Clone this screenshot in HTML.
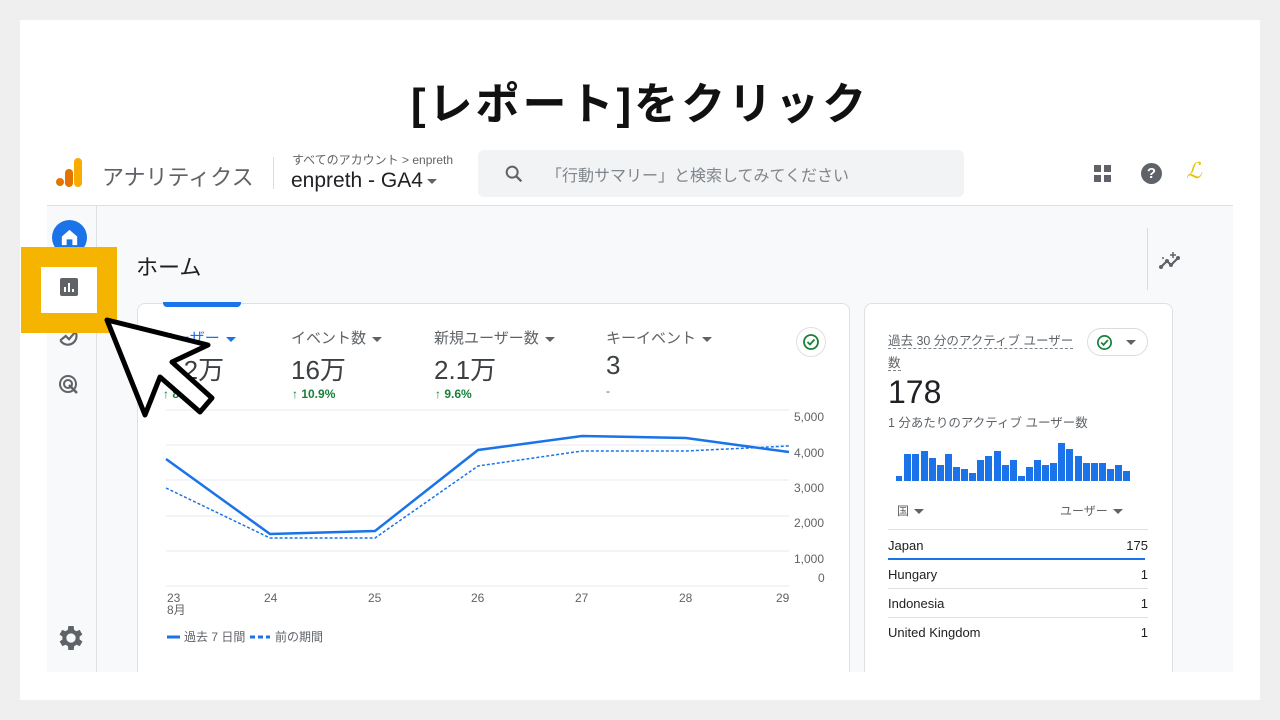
<!DOCTYPE html>
<html><head><meta charset="utf-8"><style>
*{margin:0;padding:0;box-sizing:border-box}
body{width:1280px;height:720px;background:#efefef;font-family:"Liberation Sans","Noto Sans CJK JP",sans-serif;position:relative;overflow:hidden;color:#3c4043}
.abs{position:absolute}
.slide{left:20px;top:20px;width:1240px;height:680px;background:#fff}
.title{left:0;width:1280px;top:68px;text-align:center;font-size:44px;font-weight:700;color:#111;letter-spacing:3px}
.dd{display:inline-block;width:0;height:0;border-left:5px solid transparent;border-right:5px solid transparent;border-top:5px solid #5f6368;vertical-align:middle;margin-left:6px}
</style></head><body>
<div class="abs slide"></div>
<div class="abs title">[レポート]をクリック</div>

<!-- app frame -->
<div class="abs" style="left:47px;top:140px;width:1186px;height:66px;background:#fff;border-bottom:1px solid #e0e0e0"></div>
<div class="abs" style="left:47px;top:206px;width:1186px;height:466px;background:#f8f9fa"></div>
<div class="abs" style="left:96px;top:206px;width:1px;height:466px;background:#e0e0e0"></div>

<!-- logo -->
<div class="abs" style="left:56px;top:178px;width:8px;height:8px;border-radius:4px;background:#e37400"></div>
<div class="abs" style="left:65px;top:169px;width:8px;height:18px;border-radius:4px;background:#e37400"></div>
<div class="abs" style="left:74px;top:158px;width:8px;height:29px;border-radius:4px;background:#f9ab00"></div>
<div class="abs" style="left:102px;top:160px;font-size:22px;color:#5f6368">アナリティクス</div>
<div class="abs" style="left:273px;top:157px;width:1px;height:32px;background:#dadce0"></div>
<div class="abs" style="left:292px;top:151px;font-size:12px;color:#5f6368">すべてのアカウント &gt; enpreth</div>
<div class="abs" style="left:291px;top:169px;font-size:21px;color:#202124">enpreth - GA4<span class="dd" style="margin-left:4px"></span></div>
<div class="abs" style="left:478px;top:150px;width:486px;height:47px;background:#f1f3f4;border-radius:6px"></div>
<svg class="abs" style="left:503px;top:163px" width="22" height="22" viewBox="0 0 24 24"><circle cx="10" cy="10" r="6" fill="none" stroke="#5f6368" stroke-width="2.2"/><path d="M14.5 14.5L20 20" stroke="#5f6368" stroke-width="2.5"/></svg>
<div class="abs" style="left:546px;top:162px;font-size:16px;color:#80868b">「行動サマリー」と検索してみてください</div>
<svg class="abs" style="left:1093px;top:164px" width="20" height="20"><rect x="1" y="1" width="7" height="7" fill="#5f6368"/><rect x="11" y="1" width="7" height="7" fill="#5f6368"/><rect x="1" y="11" width="7" height="7" fill="#5f6368"/><rect x="11" y="11" width="7" height="7" fill="#5f6368"/></svg>
<div class="abs" style="left:1141px;top:163px;width:21px;height:21px;border-radius:50%;background:#5f6368;color:#fff;font-size:15px;font-weight:700;text-align:center;line-height:21px">?</div>
<div class="abs" style="left:1186px;top:158px;font-size:22px;color:#e8c400;font-style:italic;font-family:'Liberation Serif',serif">ℒ</div>

<!-- sidebar -->
<div class="abs" style="left:52px;top:220px;width:35px;height:35px;border-radius:50%;background:#1a73e8"></div>
<svg class="abs" style="left:58px;top:226px" width="23" height="23" viewBox="0 0 24 24"><path d="M12 4L4 11v9h5v-6h6v6h5v-9z" fill="#fff"/></svg>
<svg class="abs" style="left:56px;top:323px" width="26" height="26" viewBox="0 0 24 24"><path d="M4 8a8 8 0 1 1 0 8M4 16l5-4 3 3 6-7" fill="none" stroke="#5f6368" stroke-width="2"/></svg>
<svg class="abs" style="left:57px;top:373px" width="24" height="24" viewBox="0 0 24 24"><circle cx="11" cy="11" r="8" fill="none" stroke="#5f6368" stroke-width="2"/><circle cx="11" cy="11" r="4" fill="none" stroke="#5f6368" stroke-width="2"/><path d="M12 12l8 8" stroke="#5f6368" stroke-width="2.5"/></svg>
<svg class="abs" style="left:55px;top:622px" width="32" height="32" viewBox="0 0 24 24"><path fill="#5f6368" d="M19.4 13a7.5 7.5 0 0 0 0-2l2.1-1.6-2-3.5-2.5 1a7 7 0 0 0-1.7-1L15 3h-4l-.4 2.9a7 7 0 0 0-1.7 1l-2.5-1-2 3.5L6.6 11a7.5 7.5 0 0 0 0 2l-2.1 1.6 2 3.5 2.5-1a7 7 0 0 0 1.7 1L11 21h4l.4-2.9a7 7 0 0 0 1.7-1l2.5 1 2-3.5zM13 15.5a3.5 3.5 0 1 1 0-7 3.5 3.5 0 0 1 0 7z" transform="translate(-1 0)"/></svg>

<!-- yellow highlight -->
<div class="abs" style="left:21px;top:247px;width:96px;height:86px;background:#f4b400"></div>
<div class="abs" style="left:41px;top:267px;width:56px;height:46px;background:#fff"></div>
<svg class="abs" style="left:59px;top:277px" width="20" height="20" viewBox="0 0 20 20"><rect x="1" y="1" width="18" height="18" rx="2" fill="#5f6368"/><rect x="5" y="10" width="2" height="5" fill="#fff"/><rect x="9" y="6" width="2" height="9" fill="#fff"/><rect x="13" y="12" width="2" height="3" fill="#fff"/></svg>

<!-- main -->
<div class="abs" style="left:136px;top:250px;font-size:22px;color:#202124">ホーム</div>
<div class="abs" style="left:1147px;top:228px;width:1px;height:62px;background:#dadce0"></div>
<svg class="abs" style="left:1158px;top:250px" width="26" height="22" viewBox="0 0 26 22"><path d="M3 17l6-6 4 4 7-7" fill="none" stroke="#5f6368" stroke-width="2.2"/><circle cx="3" cy="17" r="2" fill="#5f6368"/><circle cx="9" cy="11" r="2" fill="#5f6368"/><circle cx="13" cy="15" r="2" fill="#5f6368"/><circle cx="20" cy="8" r="2" fill="#5f6368"/><path d="M15 2v6M12 5h6" stroke="#5f6368" stroke-width="1.5"/><circle cx="5" cy="8" r="1" fill="#5f6368"/></svg>

<!-- main card -->
<div class="abs" style="left:137px;top:303px;width:713px;height:380px;background:#fff;border:1px solid #e0e0e0;border-radius:8px"></div>
<div class="abs" style="left:163px;top:302px;width:78px;height:5px;background:#1a73e8;border-radius:0 0 4px 4px"></div>
<div class="abs" style="left:160px;top:327px;font-size:15px;color:#1a73e8">ユーザー<span class="dd" style="border-top-color:#1a73e8"></span></div>
<div class="abs" style="left:162px;top:350px;font-size:26px;color:#3c4043">1.2万</div>
<div class="abs" style="left:163px;top:387px;font-size:12px;color:#188038;font-weight:700">↑ 8.2%</div>
<div class="abs" style="left:291px;top:327px;font-size:15px;color:#5f6368">イベント数<span class="dd"></span></div>
<div class="abs" style="left:291px;top:350px;font-size:26px;color:#3c4043">16万</div>
<div class="abs" style="left:292px;top:387px;font-size:12px;color:#188038;font-weight:700">↑ 10.9%</div>
<div class="abs" style="left:434px;top:327px;font-size:15px;color:#5f6368">新規ユーザー数<span class="dd"></span></div>
<div class="abs" style="left:434px;top:350px;font-size:26px;color:#3c4043">2.1万</div>
<div class="abs" style="left:435px;top:387px;font-size:12px;color:#188038;font-weight:700">↑ 9.6%</div>
<div class="abs" style="left:606px;top:327px;font-size:15px;color:#5f6368">キーイベント<span class="dd"></span></div>
<div class="abs" style="left:606px;top:350px;font-size:26px;color:#3c4043">3</div>
<div class="abs" style="left:606px;top:384px;font-size:12px;color:#5f6368">-</div>
<div class="abs" style="left:796px;top:327px;width:30px;height:30px;border-radius:50%;border:1px solid #e0e0e0"></div>
<svg class="abs" style="left:801px;top:332px" width="20" height="20" viewBox="0 0 20 20"><circle cx="10" cy="10" r="7" fill="none" stroke="#188038" stroke-width="1.8"/><path d="M6.5 10l2.5 2.5 4.5-5" fill="none" stroke="#188038" stroke-width="1.8"/></svg>

<svg class="abs" style="left:137px;top:400px" width="713" height="260">
<g stroke="#e8eaed" stroke-width="1">
<line x1="29" y1="10" x2="652" y2="10"/><line x1="29" y1="45" x2="652" y2="45"/><line x1="29" y1="80" x2="652" y2="80"/><line x1="29" y1="116" x2="652" y2="116"/><line x1="29" y1="151" x2="652" y2="151"/><line x1="29" y1="186" x2="652" y2="186"/>
</g>
<g fill="#5f6368" font-size="12" font-family="Liberation Sans,sans-serif">
<text x="657" y="21">5,000</text><text x="657" y="57">4,000</text><text x="657" y="92">3,000</text><text x="657" y="127">2,000</text><text x="657" y="163">1,000</text><text x="681" y="182">0</text>
<text x="30" y="202">23</text><text x="30" y="214">8月</text><text x="127" y="202">24</text><text x="231" y="202">25</text><text x="334" y="202">26</text><text x="438" y="202">27</text><text x="542" y="202">28</text><text x="639" y="202">29</text>
<text x="47" y="241">過去 7 日間</text><text x="138" y="241">前の期間</text>
</g>
<polyline points="29,88 133,138 238,138 341,66 445,51 549,51 652,46" fill="none" stroke="#1a73e8" stroke-width="1.5" stroke-dasharray="3,2"/>
<polyline points="29,59 133,134 238,131 341,50 445,36 549,38 652,52" fill="none" stroke="#1a73e8" stroke-width="2.5"/>
<line x1="30" y1="237" x2="43" y2="237" stroke="#1a73e8" stroke-width="3"/>
<line x1="113" y1="237" x2="133" y2="237" stroke="#1a73e8" stroke-width="3" stroke-dasharray="5,3"/>
</svg>

<!-- right card -->
<div class="abs" style="left:864px;top:303px;width:309px;height:380px;background:#fff;border:1px solid #e0e0e0;border-radius:8px"></div>
<div class="abs" style="left:888px;top:330px;width:190px;font-size:12.5px;line-height:22px;color:#5f6368"><span style="border-bottom:1px dashed #80868b">過去 30 分のアクティブ ユーザー</span><br><span style="border-bottom:1px dashed #80868b">数</span></div>
<div class="abs" style="left:1087px;top:328px;width:61px;height:28px;border-radius:14px;border:1px solid #dadce0"></div>
<svg class="abs" style="left:1095px;top:333px" width="19" height="19" viewBox="0 0 20 20"><circle cx="10" cy="10" r="7" fill="none" stroke="#188038" stroke-width="1.8"/><path d="M6.5 10l2.5 2.5 4.5-5" fill="none" stroke="#188038" stroke-width="1.8"/></svg>
<div class="abs" style="left:1126px;top:340px;width:0;height:0;border-left:5px solid transparent;border-right:5px solid transparent;border-top:5px solid #5f6368"></div>
<div class="abs" style="left:888px;top:374px;font-size:32px;color:#202124">178</div>
<div class="abs" style="left:888px;top:412px;font-size:12.5px;color:#5f6368">1 分あたりのアクティブ ユーザー数</div>
<svg class="abs" style="left:895px;top:430px" width="250" height="52">
<path fill="#1a73e8" d="M1 46h6v5h-6zM9 24h7v27h-7zM17 24h7v27h-7zM26 21h7v30h-7zM34 28h7v23h-7zM42 35h7v16h-7zM50 24h7v27h-7zM58 37h7v14h-7zM66 39h7v12h-7zM74 43h7v8h-7zM82 30h7v21h-7zM90 26h7v25h-7zM99 21h7v30h-7zM107 35h7v16h-7zM115 30h7v21h-7zM123 46h7v5h-7zM131 37h7v14h-7zM139 30h7v21h-7zM147 35h7v16h-7zM155 33h7v18h-7zM163 13h7v38h-7zM171 19h7v32h-7zM180 26h7v25h-7zM188 33h7v18h-7zM196 33h7v18h-7zM204 33h7v18h-7zM212 39h7v12h-7zM220 35h7v16h-7zM228 41h7v10h-7z"/>
</svg>
<div class="abs" style="left:897px;top:502px;font-size:12px;color:#5f6368">国<span class="dd" style="margin-left:5px"></span></div>
<div class="abs" style="left:1060px;top:502px;font-size:12px;color:#5f6368">ユーザー<span class="dd" style="margin-left:5px"></span></div>
<div class="abs" style="left:888px;top:529px;width:260px;height:1px;background:#e0e0e0"></div>
<div class="abs" style="left:888px;top:538px;font-size:13px;color:#202124;width:260px">Japan<span style="float:right">175</span></div>
<div class="abs" style="left:888px;top:558px;width:257px;height:2px;background:#1a73e8"></div>
<div class="abs" style="left:888px;top:567px;font-size:13px;color:#202124;width:260px">Hungary<span style="float:right">1</span></div>
<div class="abs" style="left:888px;top:588px;width:260px;height:1px;background:#e0e0e0"></div>
<div class="abs" style="left:888px;top:596px;font-size:13px;color:#202124;width:260px">Indonesia<span style="float:right">1</span></div>
<div class="abs" style="left:888px;top:617px;width:260px;height:1px;background:#e0e0e0"></div>
<div class="abs" style="left:888px;top:625px;font-size:13px;color:#202124;width:260px">United Kingdom<span style="float:right">1</span></div>

<!-- bottom slide edge covers overflow -->
<div class="abs" style="left:20px;top:672px;width:1240px;height:28px;background:#fff"></div>

<!-- cursor -->
<svg class="abs" style="left:0;top:0" width="260" height="440"><polygon points="107,320 208,345 172,362 212,398 200,412 160,377 145,415" fill="#fff" stroke="#000" stroke-width="5" stroke-linejoin="round"/></svg>
</body></html>
